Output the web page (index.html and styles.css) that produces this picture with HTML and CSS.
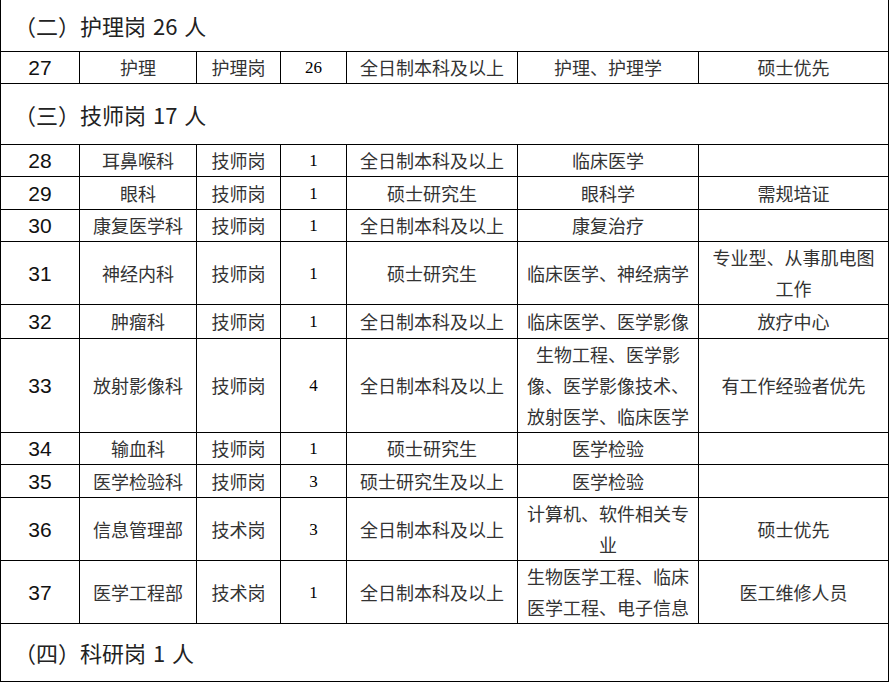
FILE: index.html
```html
<!DOCTYPE html>
<html lang="zh">
<head>
<meta charset="utf-8">
<title>岗位表</title>
<link rel="stylesheet" href="styles.css">
</head>
<body>
<table class="grid">
  <colgroup>
    <col class="c1"><col class="c2"><col class="c3"><col class="c4"><col class="c5"><col class="c6"><col class="c7">
  </colgroup>
  <tr class="top h52"><td colspan="7" class="sec">（二）护理岗 26 人</td></tr>
  <tr><td class="num">27</td><td>护理</td><td>护理岗</td><td class="cnt">26</td><td>全日制本科及以上</td><td>护理、护理学</td><td>硕士优先</td></tr>
  <tr class="h61"><td colspan="7" class="sec">（三）技师岗 17 人</td></tr>
  <tr><td class="num">28</td><td>耳鼻喉科</td><td>技师岗</td><td class="cnt">1</td><td>全日制本科及以上</td><td>临床医学</td><td></td></tr>
  <tr class="h33"><td class="num">29</td><td>眼科</td><td>技师岗</td><td class="cnt">1</td><td>硕士研究生</td><td>眼科学</td><td>需规培证</td></tr>
  <tr><td class="num">30</td><td>康复医学科</td><td>技师岗</td><td class="cnt">1</td><td>全日制本科及以上</td><td>康复治疗</td><td></td></tr>
  <tr><td class="num">31</td><td>神经内科</td><td>技师岗</td><td class="cnt">1</td><td>硕士研究生</td><td>临床医学、神经病学</td><td>专业型、从事肌电图<br>工作</td></tr>
  <tr class="h34"><td class="num">32</td><td>肿瘤科</td><td>技师岗</td><td class="cnt">1</td><td>全日制本科及以上</td><td>临床医学、医学影像</td><td>放疗中心</td></tr>
  <tr><td class="num">33</td><td>放射影像科</td><td>技师岗</td><td class="cnt">4</td><td>全日制本科及以上</td><td class="lines3">生物工程、医学影<br>像、医学影像技术、<br>放射医学、临床医学</td><td>有工作经验者优先</td></tr>
  <tr><td class="num">34</td><td>输血科</td><td>技师岗</td><td class="cnt">1</td><td>硕士研究生</td><td>医学检验</td><td></td></tr>
  <tr class="h33"><td class="num">35</td><td>医学检验科</td><td>技师岗</td><td class="cnt">3</td><td>硕士研究生及以上</td><td>医学检验</td><td></td></tr>
  <tr><td class="num">36</td><td>信息管理部</td><td>技术岗</td><td class="cnt">3</td><td>全日制本科及以上</td><td class="lines2">计算机、软件相关专<br>业</td><td>硕士优先</td></tr>
  <tr><td class="num">37</td><td>医学工程部</td><td>技术岗</td><td class="cnt">1</td><td>全日制本科及以上</td><td class="lines2">生物医学工程、临床<br>医学工程、电子信息</td><td>医工维修人员</td></tr>
  <tr class="h59"><td colspan="7" class="sec">（四）科研岗 1 人</td></tr>
</table>
</body>
</html>
```

FILE: styles.css
```css
html, body {
  margin: 0;
  padding: 0;
  background: #ffffff;
}

.grid {
  border-collapse: collapse;
  table-layout: fixed;
  width: 889px;
  font-family: "Noto Sans CJK SC", "Liberation Serif", sans-serif;
  font-size: 18px;
  color: #333333;
}

.c1 { width: 79px; }
.c2 { width: 117px; }
.c3 { width: 84px; }
.c4 { width: 66px; }
.c5 { width: 171px; }
.c6 { width: 181px; }
.c7 { width: 190px; }

.grid td {
  border: 1px solid #000;
  padding: 0 2px;
  text-align: center;
  vertical-align: middle;
  line-height: 31px;
  height: 31px;
  white-space: nowrap;
}

.grid td.num {
  font-family: "Liberation Sans", sans-serif;
  font-size: 21px;
  color: #111;
}

.grid td.cnt {
  font-family: "Liberation Serif", serif;
  font-size: 17px;
  color: #000;
}

.grid td.sec {
  text-align: left;
  padding-left: 13px;
  font-size: 22px;
  color: #222;
  word-spacing: 2px;
}

.grid .top td {
  border-top-style: hidden;
}

.grid .h52 td { height: 51px; }
.grid .h61 td { height: 60px; }
.grid .h59 td { height: 57px; }
.grid .h33 td { height: 32px; }
.grid .h34 td { height: 33px; }
```
